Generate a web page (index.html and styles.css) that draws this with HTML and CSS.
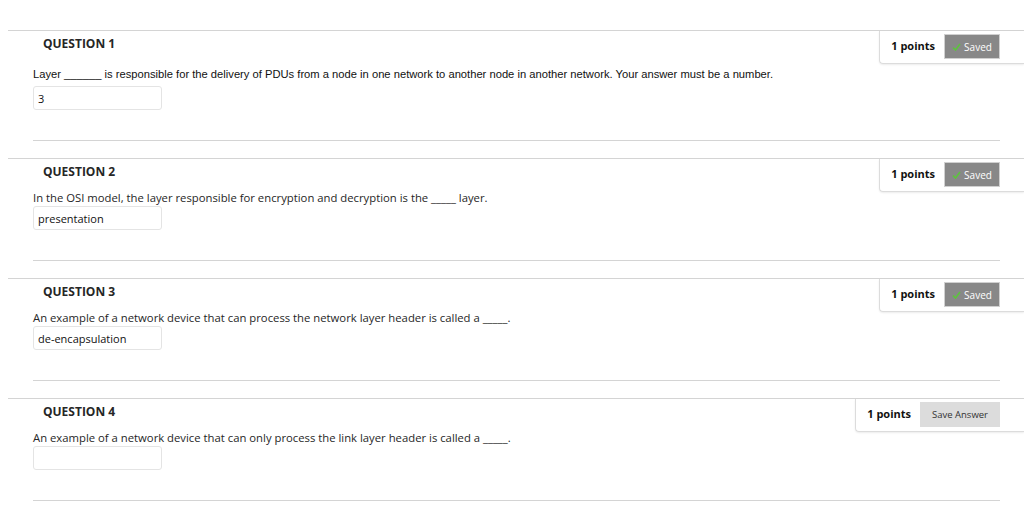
FILE: index.html
```html
<!DOCTYPE html>
<html>
<head>
    <title>Test</title>
    <link rel="stylesheet" href="styles.css">
</head>
<body>
    <div class="questions">

        <div class="question first">
            <div class="q-head">
                <h3>QUESTION 1</h3>
                <div class="points">
                    <span>1 points</span>
                    <button class="btn saved"><svg width="9" height="8" viewBox="0 0 9 8"><path d="M1 4.5 L3.5 7 L8 1" fill="none" stroke="#5cc43c" stroke-width="1.6"/></svg>Saved</button>
                </div>
            </div>
            <div class="q-body">
                <p class="q-text arial">Layer ______ is responsible for the delivery of PDUs from a node in one network to another node in another network. Your answer must be a number.</p>
                <input class="answer" type="text" value="3">
            </div>
        </div>

        <div class="question">
            <div class="q-head">
                <h3>QUESTION 2</h3>
                <div class="points">
                    <span>1 points</span>
                    <button class="btn saved"><svg width="9" height="8" viewBox="0 0 9 8"><path d="M1 4.5 L3.5 7 L8 1" fill="none" stroke="#5cc43c" stroke-width="1.6"/></svg>Saved</button>
                </div>
            </div>
            <div class="q-body">
                <p class="q-text">In the OSI model, the layer responsible for encryption and decryption is the _____ layer.</p>
                <input class="answer" type="text" value="presentation">
            </div>
        </div>

        <div class="question">
            <div class="q-head">
                <h3>QUESTION 3</h3>
                <div class="points">
                    <span>1 points</span>
                    <button class="btn saved"><svg width="9" height="8" viewBox="0 0 9 8"><path d="M1 4.5 L3.5 7 L8 1" fill="none" stroke="#5cc43c" stroke-width="1.6"/></svg>Saved</button>
                </div>
            </div>
            <div class="q-body">
                <p class="q-text">An example of a network device that can process the network layer header is called a _____.</p>
                <input class="answer" type="text" value="de-encapsulation">
            </div>
        </div>

        <div class="question">
            <div class="q-head">
                <h3>QUESTION 4</h3>
                <div class="points">
                    <span>1 points</span>
                    <button class="btn save">Save Answer</button>
                </div>
            </div>
            <div class="q-body">
                <p class="q-text">An example of a network device that can only process the link layer header is called a _____.</p>
                <input class="answer" type="text" value="">
            </div>
        </div>

    </div>
</body>
</html>
```

FILE: styles.css
```css
* {
    margin: 0;
    padding: 0;
    box-sizing: border-box;
}

body {
    background-color: #ffffff;
    font-family: "Open Sans", sans-serif;
    color: #262626;
    height: 514px;
    overflow: hidden;
}

.questions {
    padding-top: 30px;
    padding-left: 8px;
}

.question {
    border-top: 1px solid #d4d4d4;
    padding: 0 24px 0 25px;
    margin-bottom: 17px;
}

.q-head {
    display: flex;
    justify-content: space-between;
    align-items: flex-start;
}

.q-head h3 {
    font-size: 12px;
    font-weight: 700;
    line-height: 16px;
    padding: 5px 0 0 10px;
    color: #262626;
}

.points {
    display: flex;
    align-items: center;
    gap: 9px;
    margin-right: -24px;
    padding: 3px 24px 4px 11px;
    border-left: 1px solid #dcdcdc;
    border-bottom: 1px solid #dcdcdc;
    border-bottom-left-radius: 4px;
    box-shadow: 0 1px 2px rgba(0,0,0,0.08);
    font-size: 11px;
    font-weight: 700;
    color: #111;
}

.points span {
    margin-top: -2px;
}

.btn {
    height: 25px;
    font-family: "Open Sans", sans-serif;
    border: 1px solid #cfcfcf;
    display: flex;
    align-items: center;
    justify-content: center;
}

.btn.saved {
    width: 56px;
    font-size: 10px;
    background-color: #888888;
    color: #ffffff;
    gap: 3px;
    border-color: #d0d0d0;
}

.btn.save {
    width: 80px;
    font-size: 9.5px;
    background-color: #dcdcdc;
    border-color: #dcdcdc;
    color: #333333;
}

.q-body {
    border-bottom: 1px solid #d4d4d4;
    padding-bottom: 30px;
}

.q-text {
    font-size: 11.3px;
    line-height: 12px;
    color: #262626;
    margin-bottom: 2px;
}

.q-text.arial {
    font-family: "Liberation Sans", Arial, sans-serif;
    font-size: 11.2px;
    color: #111;
}

.first .q-text {
    margin-top: 4px;
    margin-bottom: 6px;
}

.answer {
    display: block;
    width: 129px;
    height: 24px;
    border: 1px solid #e4e4e4;
    border-radius: 3px;
    padding: 0 4px;
    font-family: "Open Sans", sans-serif;
    font-size: 11px;
    color: #111;
    outline: none;
}
```
